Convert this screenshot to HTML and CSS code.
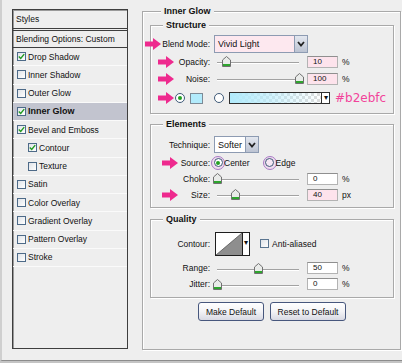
FILE: index.html
```html
<html>
<head>
    <title>Layer Style - Inner Glow</title>
    <link rel="stylesheet" href="styles.css">
</head>
<body>
<div class="dialog">
    <div class="styles-panel">
        <div class="panel-head">Styles</div>
        <div class="panel-blend">Blending Options: Custom</div>
        <ul class="fx-list">
            <li><span class="cb on"><svg viewBox="0 0 9 9" width="7" height="7"><path d="M1 4.5 L3.5 7 L8 1.5" fill="none" stroke="#1f9b1f" stroke-width="1.8"/></svg></span>Drop Shadow</li>
            <li><span class="cb"></span>Inner Shadow</li>
            <li><span class="cb"></span>Outer Glow</li>
            <li class="active"><span class="cb on"><svg viewBox="0 0 9 9" width="7" height="7"><path d="M1 4.5 L3.5 7 L8 1.5" fill="none" stroke="#1f9b1f" stroke-width="1.8"/></svg></span>Inner Glow</li>
            <li><span class="cb on"><svg viewBox="0 0 9 9" width="7" height="7"><path d="M1 4.5 L3.5 7 L8 1.5" fill="none" stroke="#1f9b1f" stroke-width="1.8"/></svg></span>Bevel and Emboss</li>
            <li class="sub"><span class="cb on"><svg viewBox="0 0 9 9" width="7" height="7"><path d="M1 4.5 L3.5 7 L8 1.5" fill="none" stroke="#1f9b1f" stroke-width="1.8"/></svg></span>Contour</li>
            <li class="sub"><span class="cb"></span>Texture</li>
            <li><span class="cb"></span>Satin</li>
            <li><span class="cb"></span>Color Overlay</li>
            <li><span class="cb"></span>Gradient Overlay</li>
            <li><span class="cb"></span>Pattern Overlay</li>
            <li><span class="cb"></span>Stroke</li>
        </ul>
    </div>

    <fieldset class="group main">
        <legend>Inner Glow</legend>

        <fieldset class="group sub structure">
            <legend>Structure</legend>
            <div class="row r-blend">
                <svg class="arrow a-far" viewBox="0 0 16 12" width="16" height="12"><path d="M0 3.5 H8 V0 L16 6 L8 12 V8.5 H0 Z"/></svg>
                <span class="lbl">Blend Mode:</span>
                <div class="select pink wide">Vivid Light<span class="drop"><svg viewBox="0 0 8 6" width="8" height="6"><path d="M1 1 L4 4.5 L7 1" fill="none" stroke="#222" stroke-width="1.8"/></svg></span></div>
            </div>
            <div class="row r-17">
                <svg class="arrow a-mid" viewBox="0 0 16 12" width="16" height="12"><path d="M0 3.5 H8 V0 L16 6 L8 12 V8.5 H0 Z"/></svg>
                <span class="lbl">Opacity:</span>
                <div class="slider"><svg class="thumb" style="left: 11%" viewBox="0 0 9 11" width="9" height="11"><path d="M4.5 0.5 L8.5 4 V10.5 H0.5 V4 Z" fill="#e9ebe9" stroke="#707070"/><rect x="1" y="8" width="7" height="2" fill="#2ea52e"/></svg></div>
                <span class="num pink">10</span><span class="unit">%</span>
            </div>
            <div class="row r-17">
                <svg class="arrow a-mid" viewBox="0 0 16 12" width="16" height="12"><path d="M0 3.5 H8 V0 L16 6 L8 12 V8.5 H0 Z"/></svg>
                <span class="lbl">Noise:</span>
                <div class="slider"><svg class="thumb" style="left: 100%" viewBox="0 0 9 11" width="9" height="11"><path d="M4.5 0.5 L8.5 4 V10.5 H0.5 V4 Z" fill="#e9ebe9" stroke="#707070"/><rect x="1" y="8" width="7" height="2" fill="#2ea52e"/></svg></div>
                <span class="num pink">100</span><span class="unit">%</span>
            </div>
            <div class="row r-color">
                <svg class="arrow a-mid" viewBox="0 0 16 12" width="16" height="12"><path d="M0 3.5 H8 V0 L16 6 L8 12 V8.5 H0 Z"/></svg>
                <span class="radio on"></span>
                <span class="swatch"></span>
                <span class="radio r-grad"></span>
                <span class="gradient"></span><span class="grad-drop">&#9662;</span>
                <span class="hex">#b2ebfc</span>
            </div>
        </fieldset>

        <fieldset class="group sub elements">
            <legend>Elements</legend>
            <div class="row r-tech">
                <span class="lbl">Technique:</span>
                <div class="select narrow">Softer<span class="drop"><svg viewBox="0 0 8 6" width="8" height="6"><path d="M1 1 L4 4.5 L7 1" fill="none" stroke="#222" stroke-width="1.8"/></svg></span></div>
            </div>
            <div class="row r-source">
                <svg class="arrow a-near" viewBox="0 0 16 12" width="16" height="12"><path d="M0 3.5 H8 V0 L16 6 L8 12 V8.5 H0 Z"/></svg>
                <span class="lbl">Source:</span>
                <span class="ring"><span class="radio on"></span></span>
                <span class="opt">Center</span>
                <span class="ring r-edge"><span class="radio"></span></span>
                <span class="opt">Edge</span>
            </div>
            <div class="row r-choke">
                <span class="lbl">Choke:</span>
                <div class="slider"><svg class="thumb" style="left: 1%" viewBox="0 0 9 11" width="9" height="11"><path d="M4.5 0.5 L8.5 4 V10.5 H0.5 V4 Z" fill="#e9ebe9" stroke="#707070"/><rect x="1" y="8" width="7" height="2" fill="#2ea52e"/></svg></div>
                <span class="num">0</span><span class="unit">%</span>
            </div>
            <div class="row r-17">
                <svg class="arrow a-near" viewBox="0 0 16 12" width="16" height="12"><path d="M0 3.5 H8 V0 L16 6 L8 12 V8.5 H0 Z"/></svg>
                <span class="lbl">Size:</span>
                <div class="slider"><svg class="thumb" style="left: 22%" viewBox="0 0 9 11" width="9" height="11"><path d="M4.5 0.5 L8.5 4 V10.5 H0.5 V4 Z" fill="#e9ebe9" stroke="#707070"/><rect x="1" y="8" width="7" height="2" fill="#2ea52e"/></svg></div>
                <span class="num pink">40</span><span class="unit">px</span>
            </div>
        </fieldset>

        <fieldset class="group sub quality">
            <legend>Quality</legend>
            <div class="row r-contour">
                <span class="lbl">Contour:</span>
                <span class="contour"><svg viewBox="0 0 26 22" width="26" height="22" preserveAspectRatio="none"><polygon points="0,22 26,0 26,22" fill="#8e8e8e"/><line x1="0" y1="22" x2="26" y2="0" stroke="#555" stroke-width="0.8"/></svg></span><span class="contour-drop">&#9662;</span>
                <span class="cb aa"></span><span class="opt">Anti-aliased</span>
            </div>
            <div class="row r-16 r-range">
                <span class="lbl">Range:</span>
                <div class="slider"><svg class="thumb" style="left: 50%" viewBox="0 0 9 11" width="9" height="11"><path d="M4.5 0.5 L8.5 4 V10.5 H0.5 V4 Z" fill="#e9ebe9" stroke="#707070"/><rect x="1" y="8" width="7" height="2" fill="#2ea52e"/></svg></div>
                <span class="num">50</span><span class="unit">%</span>
            </div>
            <div class="row r-16">
                <span class="lbl">Jitter:</span>
                <div class="slider"><svg class="thumb" style="left: 1%" viewBox="0 0 9 11" width="9" height="11"><path d="M4.5 0.5 L8.5 4 V10.5 H0.5 V4 Z" fill="#e9ebe9" stroke="#707070"/><rect x="1" y="8" width="7" height="2" fill="#2ea52e"/></svg></div>
                <span class="num">0</span><span class="unit">%</span>
            </div>
        </fieldset>

        <div class="buttons">
            <button class="btn btn-make">Make Default</button>
            <button class="btn btn-reset">Reset to Default</button>
        </div>
    </fieldset>
</div>
</body>
</html>
```

FILE: styles.css
```css
body {
    margin: 0;
    font-family: "Liberation Sans", Arial, sans-serif;
    font-size: 8.5px;
    color: #111;
    background: #c4c4c4;
}
.dialog {
    height: 361px;
    box-sizing: border-box;
    background: #eeeeee;
    border-left: 2px solid #cfcfcf;
    border-bottom: 1px solid #8c8c8c;
    display: flex;
    align-items: flex-start;
    padding: 6px 0 0 10px;
}

/* styles list on the left */
.styles-panel {
    width: 116px;
    height: 340px;
    margin-top: 3px;
    box-sizing: border-box;
    border: 1px solid #3e3e3e;
    box-shadow: inset 1px 1px 0 #9a9a9a;
    background: #eeeeee;
}
.panel-head {
    height: 18px;
    line-height: 18px;
    padding-left: 3px;
    border-bottom: 1px solid #3e3e3e;
}
.panel-blend {
    margin-top: 1px;
    height: 16px;
    line-height: 16px;
    padding-left: 3px;
    border-top: 1px solid #3e3e3e;
    border-bottom: 1px solid #3e3e3e;
}
.fx-list {
    list-style: none;
    margin: 0;
    padding: 0;
}
.fx-list li {
    height: 17.25px;
    border-bottom: 1px solid #fafafa;
    display: flex;
    align-items: center;
    padding-left: 4px;
}
.fx-list li.sub {
    padding-left: 15px;
}
.fx-list li.active {
    background: #c2c4cf;
    font-weight: bold;
    font-size: 9px;
}
.cb {
    width: 9px;
    height: 9px;
    box-sizing: border-box;
    border: 1px solid #4d6a88;
    background: linear-gradient(135deg, #dfe3e8 0%, #ffffff 100%);
    margin-right: 2px;
    flex: none;
    display: flex;
    align-items: center;
    justify-content: center;
}

/* group boxes */
fieldset.group {
    margin: 0;
    padding: 0;
    min-width: 0;
    border: 1px solid #a9a9a9;
    box-shadow: inset 1px 1px 0 #ffffff, 1px 1px 0 #ffffff;
}
fieldset.group legend {
    font-weight: bold;
    font-size: 9px;
    line-height: 10px;
    padding: 0 3px;
    margin-left: 12px;
    background: #eeeeee;
}
fieldset.main {
    margin-left: 14px;
    width: 259px;
    box-sizing: border-box;
    padding: 0 6px 28px 7px;
}
fieldset.main > legend {
    margin-left: 11px;
}
fieldset.sub {
    width: 244px;
    box-sizing: border-box;
}
fieldset.structure {
    margin-top: 4px;
    padding-bottom: 5px;
}
fieldset.elements {
    margin-top: 5px;
    padding-bottom: 4px;
}
fieldset.quality {
    margin-top: 6px;
    padding-bottom: 5px;
}

/* rows */
.row {
    display: flex;
    align-items: center;
    position: relative;
}
.r-blend {
    margin-top: 5px;
    height: 18px;
}
.r-17 {
    height: 17px;
}
.r-16 {
    height: 16px;
}
.r-color {
    margin-top: 1px;
    height: 20px;
    padding-left: 24px;
}
.r-tech {
    margin-top: 7px;
    height: 17px;
}
.r-source {
    margin-top: 1px;
    height: 17px;
}
.r-choke {
    height: 15px;
}
.r-contour {
    margin-top: 7px;
    height: 25px;
}
.r-range {
    margin-top: 4px;
}
.lbl {
    width: 59px;
    text-align: right;
    flex: none;
}

/* pink annotation arrows */
.arrow {
    position: absolute;
    top: 50%;
    margin-top: -6px;
    fill: #ee2a8e;
}
.a-far {
    left: -6px;
}
.a-mid {
    left: 7px;
}
.a-near {
    left: 11px;
}

/* controls */
.select {
    margin-left: 4px;
    box-sizing: border-box;
    border: 1px solid #8d9bb2;
    background: #ffffff;
    display: flex;
    align-items: center;
    justify-content: space-between;
    padding-left: 3px;
    font-size: 9px;
}
.select.pink {
    background: #fde8ef;
}
.select.wide {
    width: 94px;
    height: 18px;
}
.select.narrow {
    width: 45px;
    height: 17px;
}
.drop {
    width: 13px;
    height: 100%;
    box-sizing: border-box;
    border-left: 1px solid #8d9bb2;
    background: linear-gradient(#e3e7ef, #bcc3d2);
    display: flex;
    align-items: center;
    justify-content: center;
}
.slider {
    margin-left: 7px;
    width: 82px;
    height: 11px;
    position: relative;
    flex: none;
}
.slider::before {
    content: "";
    position: absolute;
    left: 0;
    right: 0;
    top: 6px;
    height: 1px;
    background: #a2a2a2;
    box-shadow: 0 1px 0 #ffffff;
}
.thumb {
    position: absolute;
    top: 0;
    margin-left: -4.5px;
}
.num {
    margin-left: 8px;
    width: 31px;
    height: 12px;
    box-sizing: border-box;
    border: 1px solid #b3b3b3;
    border-top-color: #8f8f8f;
    background: #ffffff;
    font-size: 8px;
    line-height: 10px;
    padding-left: 5px;
    flex: none;
}
.num.pink {
    background: #fde3ec;
}
.unit {
    margin-left: 4px;
}
.radio {
    width: 10px;
    height: 10px;
    box-sizing: border-box;
    border: 1px solid #3f5a78;
    border-radius: 50%;
    background: #ffffff;
    flex: none;
    position: relative;
}
.radio.on::after {
    content: "";
    position: absolute;
    left: 2px;
    top: 2px;
    width: 4px;
    height: 4px;
    border-radius: 50%;
    background: #23a023;
}
.swatch {
    margin-left: 5px;
    width: 13px;
    height: 11px;
    box-sizing: border-box;
    border: 1px solid #7d8a96;
    background: #b2ebfc;
}
.r-grad {
    margin-left: 11px;
}
.gradient {
    margin-left: 5px;
    width: 93px;
    height: 12px;
    box-sizing: border-box;
    border: 1px solid #2f2f2f;
    background:
        linear-gradient(to right, #b2ebfc 0%, rgba(178, 235, 252, 0.6) 45%, rgba(178, 235, 252, 0) 100%),
        conic-gradient(#dcdcdc 25%, #ffffff 0 50%, #dcdcdc 0 75%, #ffffff 0) 0 0 / 6px 6px;
}
.grad-drop {
    width: 8px;
    height: 12px;
    box-sizing: border-box;
    border: 1px solid #2f2f2f;
    border-left: none;
    background: #ffffff;
    font-size: 8px;
    line-height: 10px;
    text-align: center;
}
.hex {
    margin-left: 5px;
    font-family: "DejaVu Sans", sans-serif;
    font-size: 12px;
    color: #f2439a;
}
.ring {
    width: 14px;
    height: 14px;
    box-sizing: border-box;
    border: 1px solid #a77bc4;
    border-radius: 50%;
    background: #f0dcef;
    display: flex;
    align-items: center;
    justify-content: center;
    margin-left: 1px;
    flex: none;
}
.ring .radio {
    width: 9px;
    height: 9px;
}
.ring .radio.on::after {
    left: 1.5px;
    top: 1.5px;
}
.r-edge {
    margin-left: 13px;
}
.r-edge .radio {
    background: #f6e8f4;
}
.opt {
    margin-left: 0;
}
.r-source .ring + .opt {
    margin-left: -1px;
}
.contour {
    margin-left: 5px;
    width: 28px;
    height: 24px;
    box-sizing: border-box;
    border: 1px solid #1e1e1e;
    background: #ffffff;
    display: flex;
}
.contour-drop {
    width: 7px;
    height: 24px;
    box-sizing: border-box;
    border: 1px solid #1e1e1e;
    border-left: none;
    background: #ffffff;
    font-size: 8px;
    line-height: 20px;
    text-align: center;
}
.cb.aa {
    margin-left: 10px;
    margin-right: 3px;
    border-color: #5a7590;
}

/* buttons */
.buttons {
    display: flex;
    justify-content: center;
    gap: 6px;
    margin-top: 4px;
}
.btn {
    height: 19px;
    padding: 0;
    font-family: "Liberation Sans", Arial, sans-serif;
    font-size: 8.5px;
    color: #111;
    border: 1px solid #47577d;
    border-radius: 3px;
    background: linear-gradient(#ffffff 0%, #f3f3f6 50%, #d8d9e3 100%);
}
.btn-make {
    width: 66px;
}
.btn-reset {
    width: 76px;
}
```
